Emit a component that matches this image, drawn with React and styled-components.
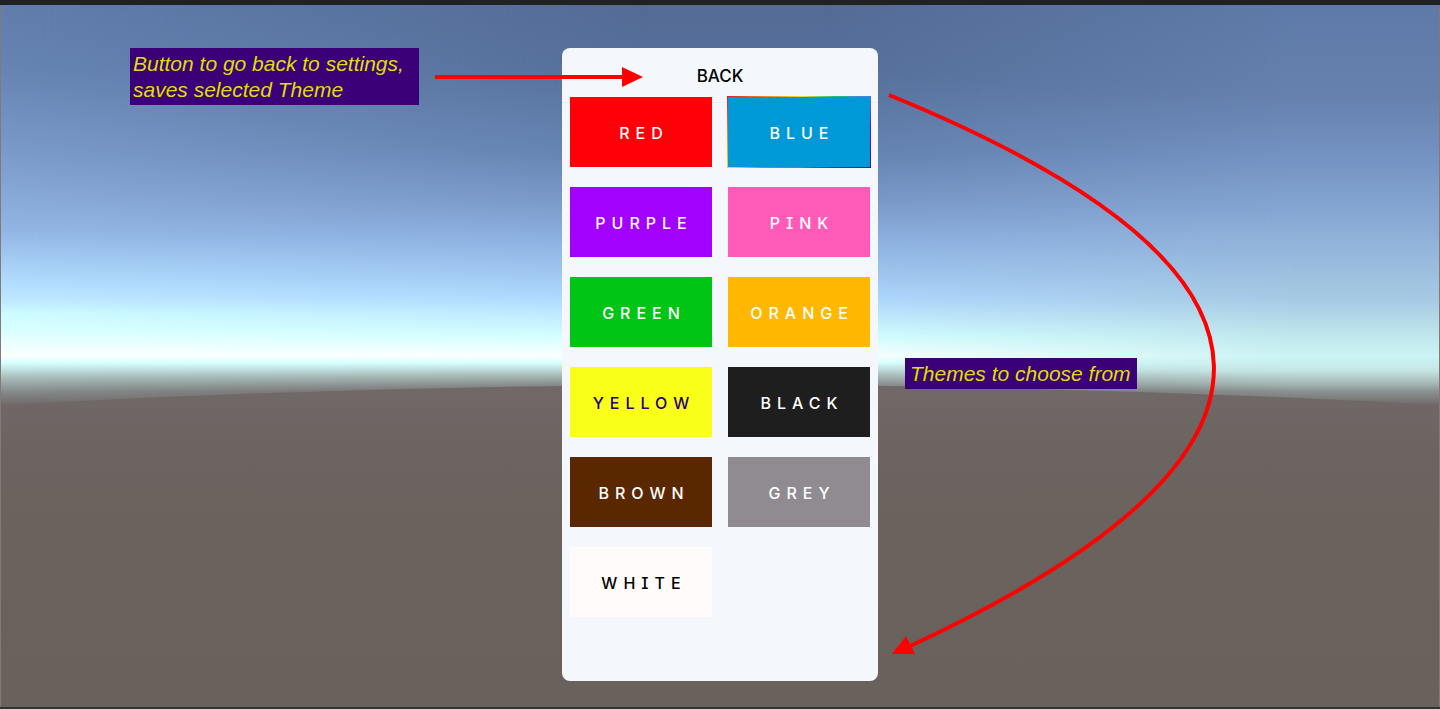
import React from "react";
import styled, { createGlobalStyle, css } from "styled-components";

const GlobalStyle = createGlobalStyle`
  *, *::before, *::after { box-sizing: border-box; }
  body { margin: 0; background: #6a615b; }
`;

const Page = styled.div`
  position: relative;
  display: flex;
  flex-direction: column;
  min-height: 100vh;
  overflow: hidden;
  border-top: 5px solid #212121;
  border-bottom: 2px solid #323232;
`;

const Scene = styled.div`
  position: absolute;
  inset: 0;
  border: solid rgba(190, 180, 180, 0.3);
  border-width: 0 1px;
`;

const skies = {
  left: css`
    background: linear-gradient(
      #607dac 0, #6684b2 9%, #7a9aca 21%, #91b5e3 32%, #a2caf2 36%,
      #b4deff 40%, #bfe8ff 42%, #cdfcff 44%, #d6ffff 46%, #fbffff 50%,
      #d5ffff 51%, #a9bfbd 53%, #868d8c 55%, #706968 57%
    );
    mask-image: linear-gradient(to right, #000, transparent 45%);
  `,
  middle: css`
    background: linear-gradient(
      #546b95 0, #56709b 10%, #6482b0 21%, #7998c8 28%, #8aaee0 33%,
      #9dc4ef 38%, #b0d9ff 42%, #c4eeff 45%, #d0ffff 47%, #fbffff 50%,
      #d8ffff 51%, #a0b0ae 53%, #706968 55%
    );
  `,
  right: css`
    background: linear-gradient(
      #5f7aa8 0, #6681ae 13%, #7391c1 21%, #84a5d1 29%, #99bcde 37%,
      #a6cae3 42%, #bfe6ec 47%, #caf4f4 50%, #c7e6e6 52%,
      #a3b6b4 54%, #8a9392 55%, #706968 57%
    );
    mask-image: linear-gradient(to left, #000 10%, transparent 43%);
  `,
};

const Sky = styled.div`
  position: absolute;
  inset: 0;
  ${({ $part }) => skies[$part]}
`;

const Ground = styled.svg`
  position: absolute;
  inset: 0;
  width: 100%;
  height: 100%;
`;

const Stage = styled.main`
  position: relative;
  flex: 1;
  display: grid;
  grid-template-columns: 1fr 316px 1fr;
  align-items: start;
  padding: 43px 0 26px;
`;

const BackCallout = styled.div`
  position: relative;
  z-index: 1;
  display: flex;
  justify-content: flex-end;
  align-items: center;
  gap: 16px;
  margin-right: -81px;
`;

const Note = styled.p`
  margin: 0;
  padding: 3px 3px 2px;
  background: #3b0078;
  color: #dfdf00;
  font: italic 21px/26px "Liberation Sans", Arial, sans-serif;
  white-space: nowrap;
`;

const BackNote = styled(Note)`
  width: 289px;
`;

const Arrow = styled.svg`
  flex: none;
  display: block;
`;

const ThemesCallout = styled.div`
  display: grid;
  place-items: start;
  padding-left: 10px;

  > * { grid-area: 1 / 1; }
`;

const ThemesNote = styled(Note)`
  width: 232px;
  margin: 310px 0 0 17px;
  padding-left: 5px;
`;

const Panel = styled.section`
  border-radius: 8px;
  background: #f4f7fc;
  padding-bottom: 64px;
`;

const Header = styled.header`
  display: flex;
  height: 55px;
  border-bottom: 1px solid #e9ecf1;
`;

const BackButton = styled.button`
  flex: 1;
  border: 0;
  padding: 2px 0 0;
  background: none;
  color: #000;
  font: 500 17px/20px Inter, "Noto Sans", sans-serif;
  cursor: pointer;
`;

const Themes = styled.div`
  display: grid;
  grid-template-columns: 1fr 1fr;
  grid-auto-rows: 70px;
  gap: 20px 16px;
  margin-top: -6px;
  padding: 0 8px;
`;

const ThemeButton = styled.button`
  border: 0;
  padding: 2px 0 0 6px;
  background: ${({ $fill }) => $fill};
  color: ${({ $ink }) => $ink || "#fff"};
  font: 500 16px/20px Inter, "Noto Sans", sans-serif;
  font-feature-settings: "cv08";
  letter-spacing: 6px;
  cursor: pointer;

  ${({ $selected, $fill }) =>
    $selected &&
    css`
      margin: -1px;
      border: 1px solid transparent;
      background:
        linear-gradient(${$fill}, ${$fill}) padding-box,
        linear-gradient(135deg, #d0202c, #f08030 17%, #e8e030 35%, #20c080 50%, #5878f0 66%, #7010e0 80%, #700080) border-box;
    `}
`;

const themes = [
  { name: "RED", fill: "#ff0008" },
  { name: "BLUE", fill: "#0099d8" },
  { name: "PURPLE", fill: "#a200ff" },
  { name: "PINK", fill: "#ff5ab8" },
  { name: "GREEN", fill: "#00c514" },
  { name: "ORANGE", fill: "#ffb700" },
  { name: "YELLOW", fill: "#f9ff18", ink: "#24007a" },
  { name: "BLACK", fill: "#1e1e1e" },
  { name: "BROWN", fill: "#5a2800" },
  { name: "GREY", fill: "#908b90" },
  { name: "WHITE", fill: "#fffbfa", ink: "#000" },
];

export default function App() {
  const [selected, setSelected] = React.useState("BLUE");

  return (
    <Page>
      <GlobalStyle />
      <Scene aria-hidden="true">
        <Sky $part="middle" />
        <Sky $part="left" />
        <Sky $part="right" />
        <Ground viewBox="0 0 1440 702" preserveAspectRatio="none">
          <defs>
            <linearGradient id="earth" gradientUnits="userSpaceOnUse" x1="0" y1="380" x2="0" y2="702">
              <stop offset="0" stopColor="#706968" />
              <stop offset="0.2" stopColor="#6b6460" />
              <stop offset="0.5" stopColor="#6a625c" />
              <stop offset="1" stopColor="#69615b" />
            </linearGradient>
          </defs>
          <path d="M0 400Q360 380 720 380T1440 400V702H0Z" fill="url(#earth)" />
        </Ground>
      </Scene>

      <Stage>
        <BackCallout>
          <BackNote>
            Button to go back to settings,
            <br />
            saves selected Theme
          </BackNote>
          <Arrow width="208" height="20" viewBox="0 0 208 20" aria-hidden="true">
            <path d="M0 10H190" stroke="#f00" strokeWidth="4" />
            <path d="M187 0L208 10L187 20Z" fill="#f00" />
          </Arrow>
        </BackCallout>

        <Panel aria-label="Themes">
          <Header>
            <BackButton type="button">BACK</BackButton>
          </Header>
          <Themes>
            {themes.map(({ name, fill, ink }) => (
              <ThemeButton
                key={name}
                type="button"
                $fill={fill}
                $ink={ink}
                $selected={name === selected}
                aria-pressed={name === selected}
                onClick={() => setSelected(name)}
              >
                {name}
              </ThemeButton>
            ))}
          </Themes>
        </Panel>

        <ThemesCallout>
          <Arrow width="330" height="612" viewBox="888 48 330 612" aria-hidden="true">
            <path d="M889 95C1319 271 1319 456 908 647" fill="none" stroke="#f00" strokeWidth="4" />
            <path d="M892 654L906 636L915 654Z" fill="#f00" />
          </Arrow>
          <ThemesNote>Themes to choose from</ThemesNote>
        </ThemesCallout>
      </Stage>
    </Page>
  );
}
